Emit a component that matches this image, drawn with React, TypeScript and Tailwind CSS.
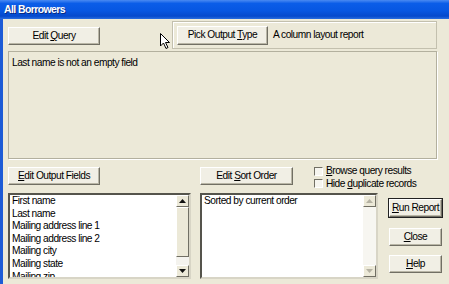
import clsx from "clsx";
import React from "react";

const Btn = ({
  children,
  className,
  primary,
}: {
  children: React.ReactNode;
  className?: string;
  primary?: boolean;
}) => (
  <div
    className={clsx(
      "flex items-center justify-center bg-[#f1efe5] border border-t-white border-l-white border-r-[#716f64] border-b-[#716f64] shadow-[inset_-1px_-1px_0_#b9b6a6]",
      primary && "outline outline-1 outline-[#222]",
      className,
    )}
  >
    {children}
  </div>
);

const Arrow = ({ up, dim }: { up?: boolean; dim?: boolean }) => (
  <svg width="7" height="4" viewBox="0 0 7 4">
    <path
      d={up ? "M3.5 0 L7 4 L0 4 Z" : "M0 0 L7 0 L3.5 4 Z"}
      fill={dim ? "#b5b2a3" : "#111"}
    />
  </svg>
);

const ScrollBtn = ({ up, dim }: { up?: boolean; dim?: boolean }) => (
  <div className="h-[12px] flex items-center justify-center bg-[#ece9d8] border border-t-white border-l-white border-r-[#716f64] border-b-[#716f64]">
    <Arrow up={up} dim={dim} />
  </div>
);

const Check = ({ children }: { children: React.ReactNode }) => (
  <div className="flex items-center gap-[3px] h-[13px]">
    <div className="w-[9px] h-[9px] border border-t-[#716f64] border-l-[#716f64] border-r-white border-b-white bg-[#f6f5ef]" />
    <span>{children}</span>
  </div>
);

const fields = [
  "First name",
  "Last name",
  "Mailing address line 1",
  "Mailing address line 2",
  "Mailing city",
  "Mailing state",
  "Mailing zip",
];

export default function App() {
  return (
    <div className="w-[449px] h-[284px] overflow-hidden bg-[#ece9d8] relative font-['Liberation_Sans',Arial,sans-serif] text-[10.2px] tracking-[-0.5px] text-black leading-none">
      {/* title bar */}
      <div className="h-[19px] flex items-center pl-[4px] bg-[linear-gradient(#4a8af2_0%,#0b5de8_18%,#0757e2_55%,#0549cc_85%,#2a6ee0_100%)]">
        <span className="text-white font-bold text-[10.5px] tracking-[-0.6px] [text-shadow:1px_1px_0_#0a2a80]">
          All Borrowers
        </span>
      </div>

      <div className="h-[265px] border-l-[3px] border-[#1d5bd6] pl-[5px] flex flex-col">
        {/* row 1 */}
        <div className="mt-[2px] h-[28px] flex">
          <Btn className="mt-[6px] w-[92px] h-[18px]">
            <span>
              Edit <u>Q</u>uery
            </span>
          </Btn>
          <div className="ml-[72px] w-[265px] h-[28px] border border-[#c3c0ae] shadow-[inset_1px_1px_0_#fff] flex items-center pl-[4px]">
            <Btn className="w-[91px] h-[19px] mt-[1px]">
              <span>
                Pick Output <u>T</u>ype
              </span>
            </Btn>
            <span className="ml-[5px]">A column layout report</span>
          </div>
        </div>

        {/* criteria area */}
        <div className="mt-[2px] w-[429px] h-[108px] border border-[#b3b09e] shadow-[1px_1px_0_#fff] pl-[3px] pt-[6px]">
          Last name is not an empty field
        </div>

        {/* row 3 */}
        <div className="mt-[5px] h-[26px] flex">
          <Btn className="mt-[3px] w-[92px] h-[18px]">
            <span>
              <u>E</u>dit Output Fields
            </span>
          </Btn>
          <Btn className="mt-[3px] ml-[100px] w-[93px] h-[18px]">
            <span>
              Edit <u>S</u>ort Order
            </span>
          </Btn>
          <div className="ml-[21px] flex flex-col pt-[1px]">
            <Check>
              <u>B</u>rowse query results
            </Check>
            <Check>
              Hide <u>d</u>uplicate records
            </Check>
          </div>
        </div>

        {/* row 4 */}
        <div className="mt-[3px] h-[86px] flex">
          <div className="w-[183px] h-[86px] bg-white border-2 border-t-[#55544c] border-l-[#55544c] border-r-[#d8d5c6] border-b-[#d8d5c6] flex">
            <div className="flex-1 pl-[2px] overflow-hidden">
              {fields.map((f) => (
                <div key={f} className="h-[12.6px] leading-[12.6px]">
                  {f}
                </div>
              ))}
            </div>
            <div className="w-[13px] flex flex-col bg-[#f4f3ee]">
              <ScrollBtn up />
              <div className="h-[50px] bg-[#ece9d8] border border-t-white border-l-white border-r-[#716f64] border-b-[#716f64]" />
              <div className="flex-1" />
              <ScrollBtn />
            </div>
          </div>

          <div className="ml-[9px] w-[178px] h-[86px] bg-white border-2 border-t-[#55544c] border-l-[#55544c] border-r-[#d8d5c6] border-b-[#d8d5c6] flex">
            <div className="flex-1 pl-[2px] leading-[12.6px]">Sorted by current order</div>
            <div className="w-[13px] flex flex-col bg-[#f7f6f1]">
              <ScrollBtn up dim />
              <div className="flex-1" />
              <ScrollBtn dim />
            </div>
          </div>

          <div className="ml-[11px] w-[53px] flex flex-col">
            <Btn primary className="mt-[6px] h-[18px]">
              <span>
                <u>R</u>un Report
              </span>
            </Btn>
            <Btn className="mt-[11px] h-[18px]">
              <span>
                <u>C</u>lose
              </span>
            </Btn>
            <Btn className="mt-[9px] h-[18px]">
              <span>
                <u>H</u>elp
              </span>
            </Btn>
          </div>
        </div>
      </div>

      {/* mouse pointer */}
      <svg className="absolute left-[160px] top-[33px]" width="12" height="17" viewBox="0 0 12 17">
        <path
          d="M0.5 0.5 L0.5 13 L3.5 10 L6 15.5 L8 14.5 L5.5 9.5 L9.5 9.5 Z"
          fill="#fff"
          stroke="#000"
          strokeWidth="1"
          strokeLinejoin="miter"
        />
      </svg>
    </div>
  );
}
